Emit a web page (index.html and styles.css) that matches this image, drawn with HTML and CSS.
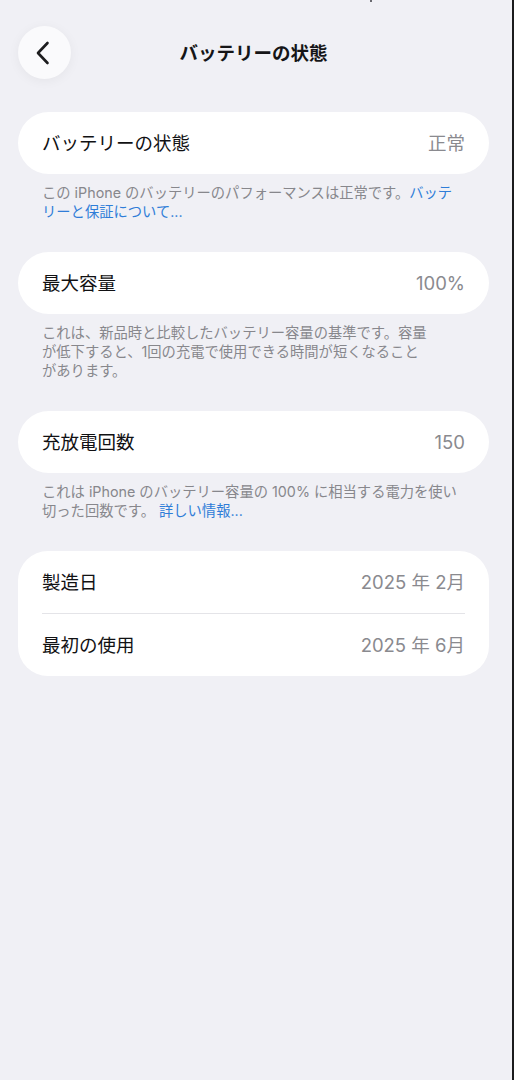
FILE: index.html
```html
<!DOCTYPE html>
<html lang="ja">
<head>
<meta charset="utf-8">
<title>バッテリーの状態</title>
<link rel="stylesheet" href="styles.css">
</head>
<body>
<div class="screen">
  <span class="status-tick"></span>
  <header class="nav">
    <button class="back" aria-label="戻る">
      <svg width="14" height="24" viewBox="0 0 14 24" aria-hidden="true">
        <path d="M11.5 2 L2 12 L11.5 22" fill="none" stroke="#1c1c1e" stroke-width="2.6" stroke-linecap="round" stroke-linejoin="round"/>
      </svg>
    </button>
    <h1 class="nav-title">バッテリーの状態</h1>
    <span class="nav-spacer"></span>
  </header>

  <main class="content">
    <section class="group">
      <div class="card pill">
        <div class="row"><span class="label">バッテリーの状態</span><span class="value">正常</span></div>
      </div>
      <p class="note">この iPhone のバッテリーのパフォーマンスは正常です。<a class="link" href="#">バッテ<br>リーと保証について...</a></p>
    </section>

    <section class="group">
      <div class="card pill">
        <div class="row"><span class="label">最大容量</span><span class="value">100%</span></div>
      </div>
      <p class="note">これは、新品時と比較したバッテリー容量の基準です。容量<br>が低下すると、1回の充電で使用できる時間が短くなること<br>があります。</p>
    </section>

    <section class="group">
      <div class="card pill">
        <div class="row"><span class="label">充放電回数</span><span class="value">150</span></div>
      </div>
      <p class="note">これは iPhone のバッテリー容量の 100% に相当する電力を使い<br>切った回数です。 <a class="link" href="#">詳しい情報...</a></p>
    </section>

    <section class="group">
      <div class="card list">
        <div class="row"><span class="label">製造日</span><span class="value">2025 年 2月</span></div>
        <div class="divider"></div>
        <div class="row"><span class="label">最初の使用</span><span class="value">2025 年 6月</span></div>
      </div>
    </section>
  </main>
</div>
</body>
</html>
```

FILE: styles.css
```css
* {
  box-sizing: border-box;
}

html, body {
  margin: 0;
  padding: 0;
  background: #f0f0f5;
}

body {
  font-family: "Inter", "Noto Sans CJK JP", "Noto Sans", sans-serif;
  color: #111113;
}

.screen {
  position: relative;
  width: 514px;
  min-height: 1080px;
  background: #f0f0f5;
  border-right: 2px solid #1b1b1d;
  padding: 26px 23px 0 18px;
}

/* clipped sliver of the status bar at the top edge */
.status-tick {
  position: absolute;
  left: 370px;
  top: 0;
  width: 2px;
  height: 2px;
  background: #6a6a70;
}

.nav {
  display: grid;
  grid-template-columns: 53px 1fr 53px;
  align-items: center;
  height: 53px;
}

.back {
  width: 53px;
  height: 53px;
  border: none;
  border-radius: 50%;
  background: #fafafc;
  box-shadow: 0 2px 12px rgba(0, 0, 0, 0.05);
  display: flex;
  align-items: center;
  justify-content: center;
  padding: 0 3px 0 0;
}

.nav-title {
  margin: 0;
  text-align: center;
  font-size: 18.5px;
  font-weight: 700;
  line-height: 24px;
  color: #151517;
}

.content {
  display: flex;
  flex-direction: column;
  gap: 31px;
  padding-top: 33px;
}

.card {
  background: #ffffff;
  padding: 0 24px;
}

.pill {
  border-radius: 31px;
}

.list {
  border-radius: 30px;
}

.row {
  height: 62px;
  display: flex;
  align-items: center;
  justify-content: space-between;
}

.label {
  font-size: 18.5px;
  line-height: 24px;
  color: #111113;
}

.value {
  font-size: 18.5px;
  line-height: 24px;
  color: #8a8a8f;
}

.divider {
  height: 1px;
  background: #e4e4e8;
}

.note {
  margin: 9px 0 0;
  padding-left: 24px;
  font-size: 14.3px;
  line-height: 19px;
  color: #87878c;
  white-space: nowrap;
}

.link {
  color: #2f7dd8;
  text-decoration: none;
}
```
